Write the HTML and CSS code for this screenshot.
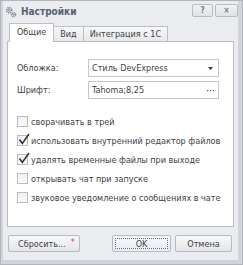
FILE: index.html
```html
<!DOCTYPE html>
<html lang="ru">
<head>
<meta charset="utf-8">
<title>Настройки</title>
<link rel="stylesheet" href="styles.css">
</head>
<body>
<div class="window">
  <div class="frame">
    <div class="titlebar">
      <svg class="gear" width="12" height="12" viewBox="0 0 12 12">
        <circle cx="4.2" cy="4.2" r="2.6" fill="none" stroke="#7d8595" stroke-width="1.6" stroke-dasharray="1.2 0.84"/>
        <circle cx="4.2" cy="4.2" r="1.1" fill="none" stroke="#7d8595" stroke-width="0.9"/>
        <circle cx="8.6" cy="8.6" r="2" fill="none" stroke="#7d8595" stroke-width="1.4" stroke-dasharray="1 0.67"/>
        <circle cx="8.6" cy="8.6" r="0.8" fill="none" stroke="#7d8595" stroke-width="0.8"/>
      </svg>
      <span class="title">Настройки</span>
      <div class="tbtns">
        <span class="tbtn">?</span>
        <span class="tbtn">×</span>
      </div>
    </div>
    <div class="body">
      <div class="tabs">
        <div class="tab active">Общие</div>
        <div class="tab">Вид</div>
        <div class="tab">Интеграция с 1С</div>
      </div>
      <div class="panel">
        <div class="form">
          <div class="row">
            <span class="label">Обложка:</span>
            <div class="field"><span class="value">Стиль DevExpress</span>
              <svg class="arrow" width="5" height="3" viewBox="0 0 5 3"><path d="M0 0H5L2.5 3Z" fill="#3c3c3c"/></svg>
            </div>
          </div>
          <div class="row">
            <span class="label">Шрифт:</span>
            <div class="field"><span class="value">Tahoma;8,25</span>
              <svg class="dots" width="7" height="2" viewBox="0 0 7 2"><rect x="0" y="0" width="1.2" height="1.2" fill="#555"/><rect x="2.9" y="0" width="1.2" height="1.2" fill="#555"/><rect x="5.8" y="0" width="1.2" height="1.2" fill="#555"/></svg>
            </div>
          </div>
        </div>
        <div class="checks">
          <div class="check"><span class="box"></span><span>сворачивать в трей</span></div>
          <div class="check"><span class="box"><svg class="tick" width="12" height="12" viewBox="0 0 12 12"><path d="M1.5 6.5L4.3 10.5L11 1" fill="none" stroke="#2f2f2f" stroke-width="1.5"/></svg></span><span>использовать внутренний редактор файлов</span></div>
          <div class="check"><span class="box"><svg class="tick" width="12" height="12" viewBox="0 0 12 12"><path d="M1.5 6.5L4.3 10.5L11 1" fill="none" stroke="#2f2f2f" stroke-width="1.5"/></svg></span><span>удалять временные файлы при выходе</span></div>
          <div class="check"><span class="box"></span><span>открывать чат при запуске</span></div>
          <div class="check"><span class="box"></span><span>звуковое уведомление о сообщениях в чате</span></div>
        </div>
      </div>
      <div class="buttons">
        <div class="btn reset">Сбросить...<span class="star">*</span></div>
        <div class="spacer"></div>
        <div class="btn ok"><span class="focus">OK</span></div>
        <div class="btn cancel">Отмена</div>
      </div>
    </div>
  </div>
</div>
</body>
</html>
```
FILE: styles.css
```css
html, body {
  margin: 0;
  padding: 0;
  background: #ebecef;
}
body {
  font-family: "DejaVu Sans Condensed", "DejaVu Sans", sans-serif;
  font-size: 9px;
  color: #424242;
}
.window {
  width: 243px;
  height: 265px;
  box-sizing: border-box;
  border: 1px solid #b2b5bc;
  background: #ebecef;
}
.frame {
  height: 100%;
  box-sizing: border-box;
  border-style: solid;
  border-color: #d2d4d9;
  border-width: 0 4px 4px 2px;
  display: flex;
  flex-direction: column;
}
.titlebar {
  height: 21px;
  display: flex;
  align-items: center;
  padding-left: 2px;
}
.gear {
  display: block;
  margin-right: 4px;
}
.title {
  font-weight: bold;
  font-size: 10px;
  color: #5b6272;
}
.tbtns {
  margin-left: auto;
  display: flex;
  gap: 2px;
  margin-top: -2px;
}
.tbtn {
  width: 21px;
  height: 13px;
  box-sizing: border-box;
  border: 1px solid #b9bcc3;
  border-radius: 2px;
  background: linear-gradient(#f1f2f4, #dfe1e5);
  color: #737a87;
  font-weight: bold;
  font-size: 8px;
  line-height: 11px;
  text-align: center;
}
.tbtn + .tbtn {
  width: 23px;
}
.body {
  flex: 1;
  display: flex;
  flex-direction: column;
  padding: 1px 4px 0 4px;
}
.tabs {
  display: flex;
  align-items: flex-end;
  height: 18px;
  padding-left: 2px;
  position: relative;
  z-index: 1;
}
.tab {
  height: 15px;
  box-sizing: border-box;
  border: 1px solid #bcbfc6;
  border-bottom: none;
  background: linear-gradient(#f6f7f8, #e7e8eb);
  padding: 0 6px;
  line-height: 14px;
  margin-left: -1px;
}
.tab.active {
  height: 19px;
  margin-bottom: -1px;
  background: #ffffff;
  padding: 0 7px;
  line-height: 17px;
  margin-left: 0;
}
.panel {
  height: 186px;
  box-sizing: border-box;
  background: #ffffff;
  border: 1px solid #b9bcc3;
  padding: 17px 0 0 9px;
}
.row {
  display: flex;
  align-items: center;
  height: 18px;
  margin-bottom: 4px;
}
.label {
  width: 71px;
}
.field {
  width: 131px;
  height: 18px;
  box-sizing: border-box;
  border: 1px solid #c3c6cc;
  display: flex;
  align-items: center;
  padding: 0 4px 0 3px;
}
.value {
  flex: 1;
}
.arrow {
  display: block;
  margin-right: 1px;
}
.dots {
  display: block;
  margin-top: 2px;
}
.checks {
  margin-top: 13px;
}
.check {
  height: 19px;
  display: flex;
  align-items: center;
}
.box {
  width: 11px;
  height: 11px;
  box-sizing: border-box;
  border: 1px solid #b9bcc2;
  background: linear-gradient(#f0f1f3, #fafafa);
  margin-right: 3px;
  position: relative;
}
.tick {
  position: absolute;
  left: 0;
  top: -3px;
}
.buttons {
  display: flex;
  margin-top: 8px;
  padding: 0 2px 0 1px;
}
.btn {
  height: 17px;
  box-sizing: border-box;
  border: 1px solid #b7bac2;
  border-radius: 2px;
  background: linear-gradient(#f7f8f9, #e4e6ea);
  display: flex;
  align-items: center;
  justify-content: center;
}
.reset {
  width: 72px;
  justify-content: flex-start;
  padding-left: 9px;
}
.star {
  color: #e03a3a;
  margin-left: 5px;
  font-size: 9px;
  margin-top: -4px;
}
.spacer {
  flex: 1;
}
.ok {
  width: 59px;
  padding: 2px;
  background: linear-gradient(#f8fafd, #e6ebf3);
}
.focus {
  flex: 1;
  align-self: stretch;
  border: 1px dotted #6a6f78;
  display: flex;
  align-items: center;
  justify-content: center;
}
.cancel {
  width: 57px;
  margin-left: 4px;
}
```
